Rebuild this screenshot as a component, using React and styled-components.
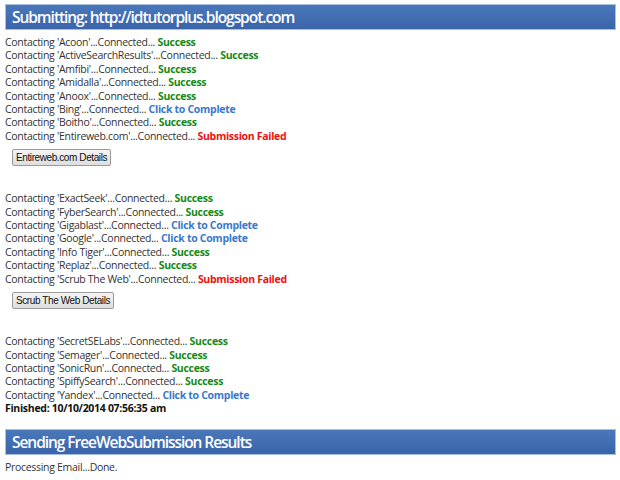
import React from "react";
import styled, { createGlobalStyle } from "styled-components";

const Global = createGlobalStyle`
  body {
    margin: 0;
    background: #fff;
    font-family: "Open Sans", "Noto Sans", sans-serif;
  }
`;

const Page = styled.div`
  width: 620px;
  padding: 4px 4px 0 5px;
  box-sizing: border-box;
`;

const Header = styled.div`
  height: 26px;
  box-sizing: border-box;
  border: 1px solid #a9bfe2;
  background: linear-gradient(#4a77ba, #3a64a9);
  color: #fff;
  font-size: 15.5px;
  font-weight: 600;
  letter-spacing: -1.05px;
  line-height: 24px;
  padding-left: 6px;
  margin-top: ${(p) => p.top || 0}px;
`;

const Block = styled.div`
  margin-top: ${(p) => p.top}px;
  font-size: 10.5px;
  letter-spacing: -0.3px;
  line-height: 13.4px;
  color: #333;
`;

const Line = styled.div`
  white-space: nowrap;
  font-weight: ${(p) => (p.bold ? 700 : 400)};
  color: ${(p) => (p.bold ? "#111" : "#333")};
`;

const Status = styled.span`
  font-weight: 700;
  color: ${(p) =>
    p.kind === "ok" ? "#168a16" : p.kind === "click" ? "#3a78cc" : "#f01010"};
`;

const Button = styled.button`
  display: block;
  margin: 6px 0 0 7px;
  height: 17px;
  padding: 0 3px;
  font-family: "Liberation Sans", Arial, sans-serif;
  font-size: 10px;
  letter-spacing: -0.4px;
  color: #111;
  background: linear-gradient(#f4f4f4, #dedede);
  border: 1px solid #9a9a9a;
  border-radius: 2px;
`;

const labels = { ok: "Success", click: "Click to Complete", fail: "Submission Failed" };

const groups = [
  {
    top: 6,
    items: [
      ["Acoon", "ok"],
      ["ActiveSearchResults", "ok"],
      ["Amfibi", "ok"],
      ["Amidalla", "ok"],
      ["Anoox", "ok"],
      ["Bing", "click"],
      ["Boitho", "ok"],
      ["Entireweb.com", "fail"],
    ],
    button: "Entireweb.com Details",
  },
  {
    top: 26,
    items: [
      ["ExactSeek", "ok"],
      ["FyberSearch", "ok"],
      ["Gigablast", "click"],
      ["Google", "click"],
      ["Info Tiger", "ok"],
      ["Replaz", "ok"],
      ["Scrub The Web", "fail"],
    ],
    button: "Scrub The Web Details",
  },
  {
    top: 26,
    items: [
      ["SecretSELabs", "ok"],
      ["Semager", "ok"],
      ["SonicRun", "ok"],
      ["SpiffySearch", "ok"],
      ["Yandex", "click"],
    ],
    finished: "Finished: 10/10/2014 07:56:35 am",
  },
];

export default function App() {
  return (
    <Page>
      <Global />
      <Header>Submitting: http://idtutorplus.blogspot.com</Header>
      {groups.map((g, i) => (
        <Block key={i} top={g.top}>
          {g.items.map(([name, kind]) => (
            <Line key={name}>
              Contacting '{name}'...Connected... <Status kind={kind}>{labels[kind]}</Status>
            </Line>
          ))}
          {g.finished && <Line bold>{g.finished}</Line>}
          {g.button && <Button>{g.button}</Button>}
        </Block>
      ))}
      <Header top={13}>Sending FreeWebSubmission Results</Header>
      <Block top={6}>
        <Line>Processing Email...Done.</Line>
      </Block>
    </Page>
  );
}
